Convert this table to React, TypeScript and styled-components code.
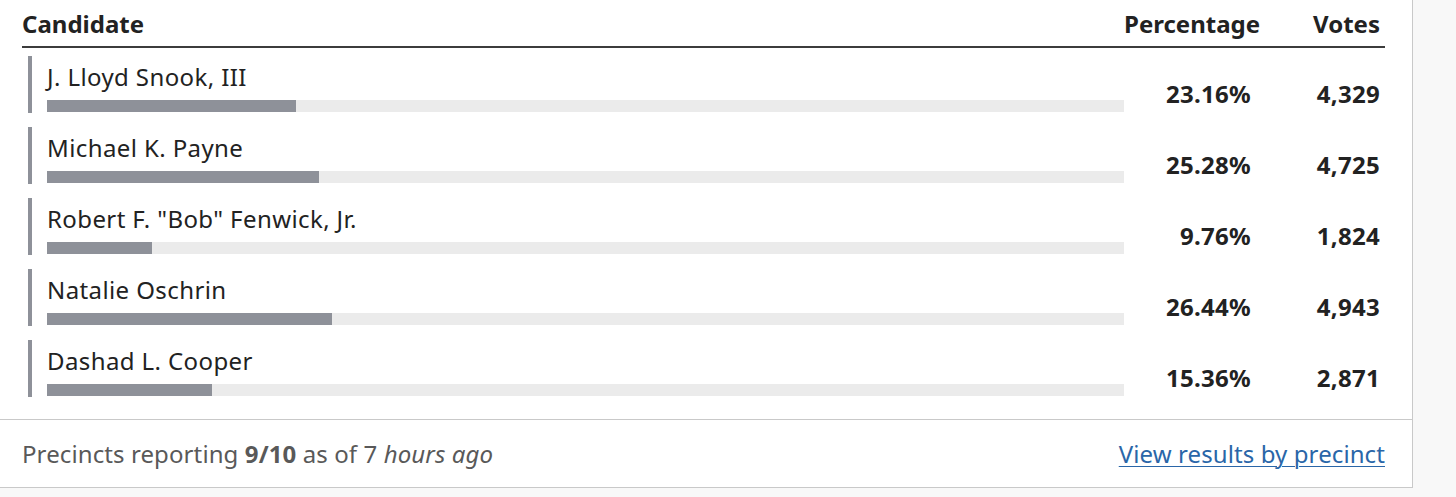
import React from "react";
import styled, { createGlobalStyle } from "styled-components";

const GlobalStyle = createGlobalStyle`
  html, body {
    margin: 0;
    padding: 0;
    background: #f8f8f8;
  }
  body {
    font-family: "Noto Sans", "Open Sans", sans-serif;
    color: #222;
  }
`;

interface Candidate {
  name: string;
  pct: number;
  votes: string;
}

const candidates: Candidate[] = [
  { name: "J. Lloyd Snook, III", pct: 23.16, votes: "4,329" },
  { name: "Michael K. Payne", pct: 25.28, votes: "4,725" },
  { name: 'Robert F. "Bob" Fenwick, Jr.', pct: 9.76, votes: "1,824" },
  { name: "Natalie Oschrin", pct: 26.44, votes: "4,943" },
  { name: "Dashad L. Cooper", pct: 15.36, votes: "2,871" },
];

const COLUMNS = "1102px 127px 129px";

// Outer panel with the results table
const Card = styled.section`
  width: 1413px;
  box-sizing: border-box;
  background: #fff;
  border-right: 1px solid #c9c9c9;
  border-bottom: 1px solid #c9c9c9;
  padding: 0 27px 22px 22px;
`;

const HeaderRow = styled.div`
  display: grid;
  grid-template-columns: ${COLUMNS};
  height: 46px;
  align-items: center;
  border-bottom: 2px solid #3c3c3c;
  font-size: 24px;
  font-weight: 700;
`;

const HeadCell = styled.div<{ $right?: boolean; $shift?: number }>`
  text-align: ${(p) => (p.$right ? "right" : "left")};
  margin-right: ${(p) => p.$shift ?? 0}px;
`;

const Rows = styled.div`
  display: flex;
  flex-direction: column;
  gap: 14px;
  padding-top: 8px;
`;

const Row = styled.div`
  display: grid;
  grid-template-columns: ${COLUMNS};
  align-items: center;
`;

const NameCell = styled.div`
  margin-left: 6px;
  border-left: 4px solid #8e9199;
  padding: 6px 0 1px 15px;
  height: 57px;
  box-sizing: border-box;
  display: flex;
  flex-direction: column;
  justify-content: space-between;
`;

const Name = styled.div`
  font-size: 24px;
  line-height: 30px;
  letter-spacing: 0.4px;
  color: #222;
`;

const Track = styled.div`
  height: 12px;
  background: #ebebeb;
  width: 100%;
`;

const Fill = styled.div`
  height: 100%;
  background: #8e9199;
`;

const Num = styled.div`
  text-align: right;
  font-size: 24px;
  font-weight: 700;
  letter-spacing: 0.3px;
  padding-top: 18px;
`;

const Footer = styled.footer`
  width: 1413px;
  height: 68px;
  box-sizing: border-box;
  background: #fff;
  border-right: 1px solid #c9c9c9;
  border-bottom: 1px solid #c9c9c9;
  padding: 0 27px 0 22px;
  display: flex;
  align-items: center;
  justify-content: space-between;
  font-size: 24px;
  letter-spacing: 0.1px;
`;

const Status = styled.div`
  color: #595959;
  b {
    font-weight: 700;
  }
  i {
    font-style: italic;
  }
`;

const Link = styled.a`
  color: #2a66a8;
  text-decoration: underline;
  text-underline-offset: 3px;
  text-decoration-thickness: 1px;
`;

export default function App() {
  return (
    <>
      <GlobalStyle />
      <Card>
        <HeaderRow>
          <HeadCell>Candidate</HeadCell>
          <HeadCell $right $shift={-6}>
            Percentage
          </HeadCell>
          <HeadCell $right>Votes</HeadCell>
        </HeaderRow>
        <Rows>
          {candidates.map((c) => (
            <Row key={c.name}>
              <NameCell>
                <Name>{c.name}</Name>
                <Track>
                  <Fill style={{ width: `${c.pct}%` }} />
                </Track>
              </NameCell>
              <Num>{c.pct.toFixed(2)}%</Num>
              <Num>{c.votes}</Num>
            </Row>
          ))}
        </Rows>
      </Card>
      <Footer>
        <Status>
          Precincts reporting <b>9/10</b> as of 7 <i>hours ago</i>
        </Status>
        <Link href="#">View results by precinct</Link>
      </Footer>
    </>
  );
}
